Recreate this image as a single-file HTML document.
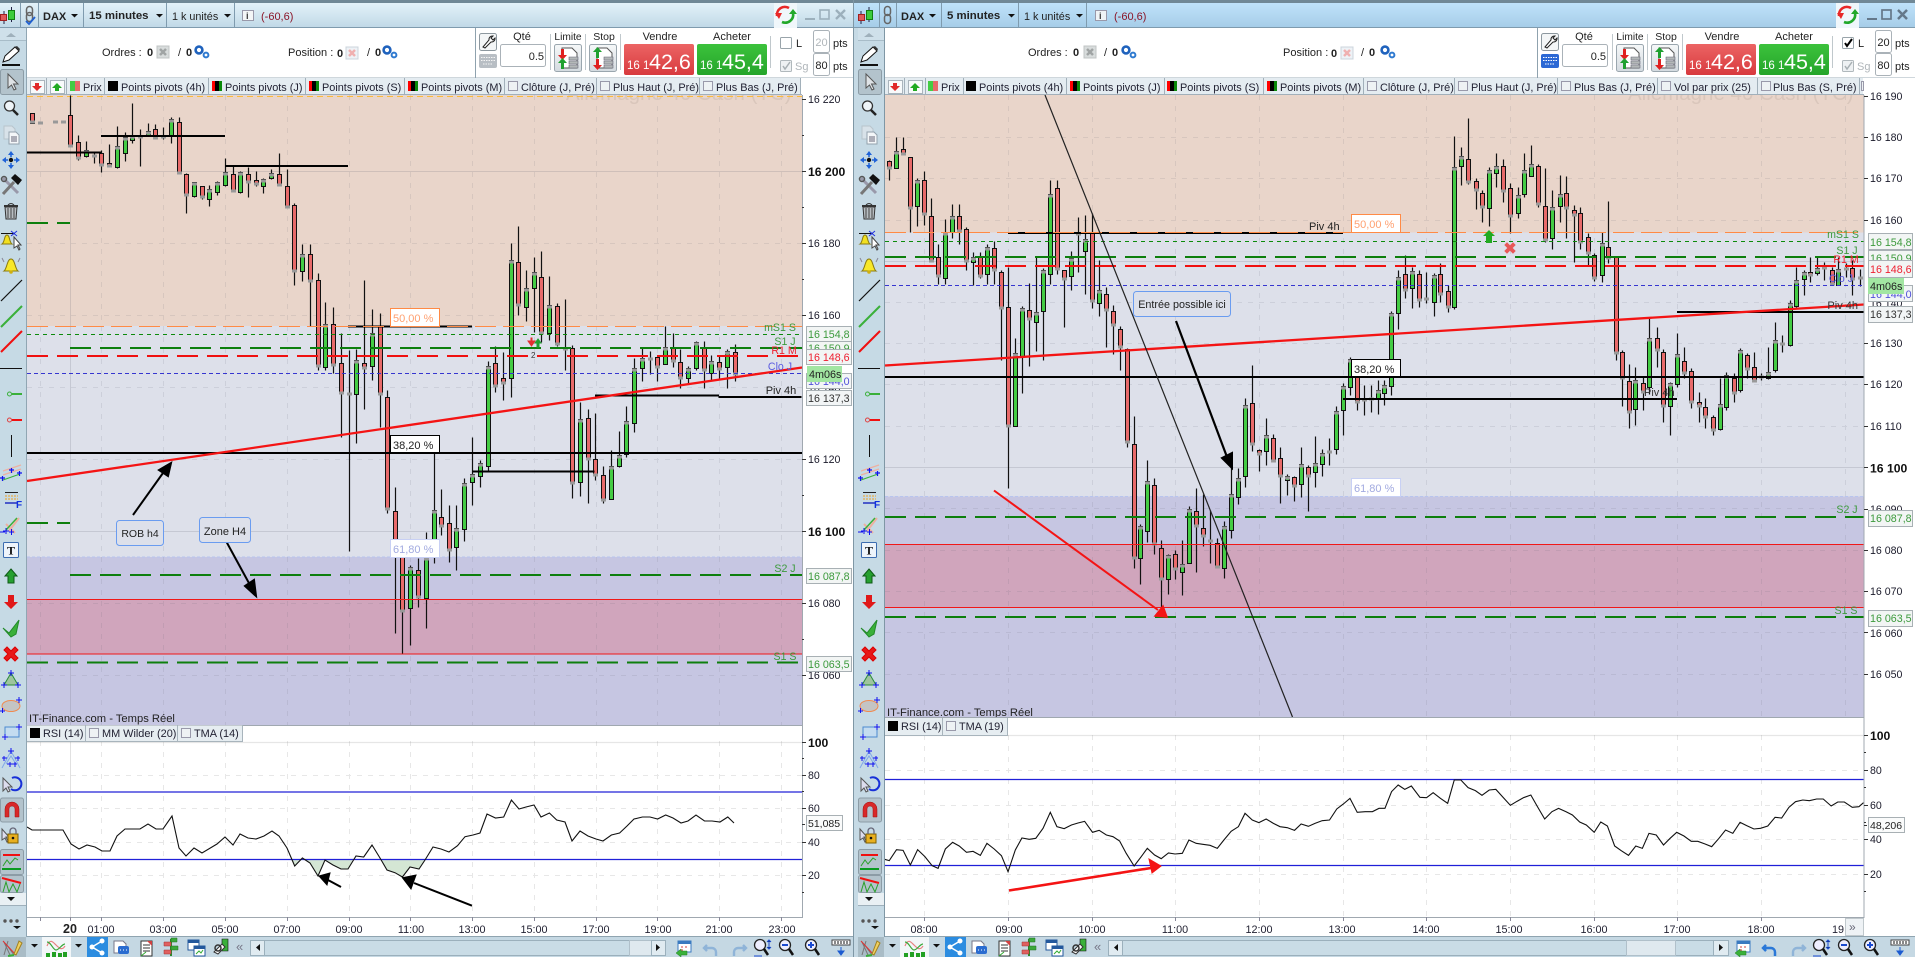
<!DOCTYPE html>
<html lang="fr"><head><meta charset="utf-8"><title>DAX</title>
<style>
html,body{margin:0;padding:0;background:#fff;overflow:hidden}
svg{display:block;position:absolute;left:0;top:0}
text{font-family:"Liberation Sans",sans-serif;font-size:11px;fill:#222}
.ax{font-size:10.6px;fill:#1a1a2a}.axb{font-size:12.2px;font-weight:bold;fill:#111}
.tab{font-size:10.9px;fill:#223}.tm{font-size:10.8px;fill:#223;text-anchor:middle}
.gr{fill:#3c9a3c;text-anchor:middle;font-size:10.6px}.rd{fill:#ee2030;text-anchor:middle;font-size:10.6px}.bl{fill:#5a5ae0;text-anchor:middle;font-size:10.6px}
.tg{font-size:10.7px}
</style></head><body>
<svg width="1915" height="957" viewBox="0 0 1915 957" xmlns="http://www.w3.org/2000/svg">
<defs>
<linearGradient id="gl" x1="0" y1="0" x2="0" y2="1"><stop offset="0" stop-color="#e3f2f9"/><stop offset="1" stop-color="#c1d9e7"/></linearGradient>
<linearGradient id="gr" x1="0" y1="0" x2="0" y2="1"><stop offset="0" stop-color="#bfe2fa"/><stop offset="1" stop-color="#a6cde8"/></linearGradient>
<linearGradient id="rb" x1="0" y1="0" x2="0" y2="1"><stop offset="0" stop-color="#ec6464"/><stop offset="1" stop-color="#d83a3e"/></linearGradient>
<linearGradient id="gb" x1="0" y1="0" x2="0" y2="1"><stop offset="0" stop-color="#3cc23c"/><stop offset="1" stop-color="#25a52a"/></linearGradient>
<linearGradient id="btn" x1="0" y1="0" x2="0" y2="1"><stop offset="0" stop-color="#f6f8f9"/><stop offset="1" stop-color="#d4dbe0"/></linearGradient>
<g id="gear"><circle cx="5" cy="5" r="3.4" fill="none" stroke="#1f62bd" stroke-width="2.6"/><circle cx="12" cy="10" r="2.4" fill="none" stroke="#2f7ad0" stroke-width="2"/></g>
<g id="doc"><path d="M1 1h12v12H1z" fill="#d8dcdc" stroke="#c0c4c4"/><path d="M4 4l6 6M10 4l-6 6" stroke="#a0a4a4" stroke-width="2.5"/></g>
<g id="docp"><path d="M1 1h12v12H1z" fill="#eef2f6" stroke="#ccd4dc"/><path d="M4 4l6 6M10 4l-6 6" stroke="#f0b0b0" stroke-width="2.5"/></g>
<g id="lim"><rect x=".5" y=".5" width="27" height="27" rx="2" fill="url(#btn)" stroke="#9aa6ae"/><path d="M8 4h10l5 5v15H8z" fill="#fff" stroke="#555"/><path d="M15 17h9v3h-9zM15 21h9v3h-9zM15 13h9v3h-9z" fill="#b4b8b8" stroke="#667" stroke-width=".6"/></g>
<g id="tabbtn"><rect x=".5" y=".5" width="14" height="13" fill="#f8fafb" stroke="#aab4bc"/></g>
<g id="side">
<rect x="0" y="28" width="26" height="12" fill="#cfe0ea"/><path d="M6 37l5-4 5 4z" fill="#9fb0bb"/><path d="M0 40.500h26" stroke="#a8bcc8"/>
<path d="M2 65H20" stroke="#111" stroke-width="2"/><path d="M3 62l2-6 10-9 4 4-10 9z" fill="#fff" stroke="#111"/><path d="M15 47l2-1 3 3-1 2z" fill="#333"/>
<rect x=".5" y="69.500" width="23" height="25" rx="2" fill="#b3c3cc" stroke="#8c9ca6"/><path d="M8 74v14l3.500-3 2.500 5 2-1-2.500-5h4.500z" fill="#dfe3e6" stroke="#555"/>
<circle cx="9.500" cy="106" r="5" fill="#eef4f8" stroke="#333" stroke-width="1.300"/><path d="M13 110l5 5" stroke="#222" stroke-width="2.500"/>
<path d="M4 126h8l3 3v10H4z" fill="#d8e2e9" stroke="#b8c4cc"/><path d="M9 132h7l3 3v9H9z" fill="#f4f7f9" stroke="#93a2ad"/><path d="M11 137h6M11 139h6M11 141h6" stroke="#667"/>
<circle cx="11" cy="160" r="2.200" fill="#111"/><path d="M11 151l-3 4h6zM11 169l-3-4h6zM2 160l4-3v6zM20 160l-4-3v6z" fill="#1f62d8"/><path d="M11 154v3M11 163v3M5 160h3M14 160h3" stroke="#1f62d8" stroke-width="1.500"/>
<path d="M3 178l15 15" stroke="#99a" stroke-width="3"/><path d="M3 194l11-12" stroke="#777" stroke-width="3"/><path d="M11 178l4-4 7 6-4 5z" fill="#111"/><circle cx="4" cy="179" r="2.500" fill="none" stroke="#555" stroke-width="1.500"/>
<path d="M5 207h12l-1 12H6z" fill="#b8bec2" stroke="#333"/><path d="M4 206h14" stroke="#333" stroke-width="2"/><path d="M8 208v10M11 208v10M14 208v10" stroke="#444"/><path d="M8 205q3-3 6 0" fill="none" stroke="#333"/>
<path d="M1 233.500h14" stroke="#111"/><path d="M2 244c3-2 2-9 5-9s2 7 5 9z" fill="#f2e020" stroke="#8a7a10"/><path d="M14 237v11l3-2 2 4 1-1-2-4h3z" fill="#fff" stroke="#444"/><path d="M11 231l6 5M17 231l-6 5" stroke="#2030e0"/>
<path d="M4 271c3-2 3-12 7-12s4 10 7 12z" fill="#f8e828" stroke="#8a7a10"/><path d="M2 258l2 4M20 258l-2 4" stroke="#889"/><circle cx="11" cy="272" r="1.800" fill="#d0b010"/>
<path d="M1 301l21-21" stroke="#111" stroke-width="1.200"/><path d="M1 327l21-21" stroke="#3ab03a" stroke-width="2"/><path d="M1 352l21-21" stroke="#f01010" stroke-width="2"/><path d="M0 368.500h22" stroke="#111"/>
<path d="M12 394h10" stroke="#3ab03a" stroke-width="2"/><circle cx="9.500" cy="394" r="2" fill="none" stroke="#3ab03a"/><path d="M12 420h10" stroke="#f01010" stroke-width="2"/><circle cx="9.500" cy="420" r="2" fill="none" stroke="#e04040"/>
<path d="M11.500 435v22" stroke="#111"/>
<path d="M3 471l18-6M3 475l18-6" stroke="#eeb0a0" stroke-width="1.200"/><path d="M3 480l17-6" stroke="#3ab03a"/><path d="M0 478h5M2.500 476v5M17 473h5M19.500 471v5M9 470h5M11.500 468v5" stroke="#1010f0" stroke-width="1.200"/>
<path d="M5 492.500h13" stroke="#222"/><path d="M5 496h13M5 499h13" stroke="#f0a020" stroke-dasharray="2 1"/><path d="M5 503h12" stroke="#2030c0" stroke-width="1.500"/><text x="16" y="508" style="font-size:10px;font-weight:bold;fill:#1030e0">F</text>
<path d="M9 531l10-13M6 524l9 9" stroke="#eeb0a0" stroke-width="2"/><path d="M6 530l11-12" stroke="#3ab03a" stroke-width="1.500"/><path d="M3 531h6M6 528v6M1 532h4M0 532h5M9 532h5M11.500 529v6" stroke="#1010f0"/>
<rect x="3.500" y="542.500" width="15" height="15" rx="1" fill="#eef4fb" stroke="#3c6cb0"/><text x="11" y="554.500" text-anchor="middle" style="font-size:12px;font-weight:bold;fill:#111;font-family:'Liberation Serif',serif">T</text>
<path d="M11 569l6 7h-3v7H8v-7H5z" fill="#26a030" stroke="#0e5a16"/>
<path d="M8 595h6v7h4l-7 7-7-7h4z" fill="#e01818"/>
<path d="M3 628l6 5 10-13-3 14-5 3z" fill="#3ab03a" stroke="#228a28"/>
<path d="M4 650l3-3 4 4 4-4 3 3-4 4 4 4-3 3-4-4-4 4-3-3 4-4z" fill="#e81818" stroke="#d00"/>
<path d="M11 673l7 12H4z" fill="#9ec49e" stroke="#2a8a3a"/><path d="M8 673h6M11 670v6M1 685h6M4 682v6M15 685h6M18 682v6" stroke="#1010f0"/>
<ellipse cx="11" cy="706" rx="9" ry="5.500" fill="#c4c4c4" stroke="#f08a50"/><path d="M16 700h6M19 697v6M0 711h5M2.500 708v5" stroke="#1010f0"/>
<path d="M5 727h14v10H5z" fill="#c4dcf0" stroke="#4c8ad0"/><path d="M16 727h6M19 724v6M2 737h6M5 734v6" stroke="#1010f0"/>
<path d="M11 751l-9 17M11 751l9 17M6 764l5-8 5 8" fill="none" stroke="#80a8e8"/><path d="M8 751h6M11 748v6M2 758h5M4 756v5M15 758h5M18 756v5M7 764h5M10 762v5M12 764h5M15 762v5" stroke="#1010f0"/>
<path d="M3 778v13l3-3 2 4 2-1-2-4h4z" fill="#dde" stroke="#555"/><path d="M12 778a6.500 6.500 0 1 1-1 11" fill="none" stroke="#1830d8" stroke-width="2"/>
<rect x=".5" y="798" width="23" height="24" rx="2" fill="#b3c3cc" stroke="#8c9ca6"/><path d="M5 817v-8a7 7 0 0 1 14 0v8h-4v-8a3 3 0 0 0-6 0v8z" fill="#d82828" stroke="#a01010" stroke-width=".5"/>
<path d="M2 829v11l3-2 2 4 1-1-2-4h3z" fill="#dde" stroke="#555"/><rect x="8" y="834" width="10" height="9" fill="#e8b020" stroke="#806000"/><path d="M10 834v-3a3 3 0 0 1 6 0v3" fill="none" stroke="#667" stroke-width="1.300"/><circle cx="13" cy="838" r="1.300" fill="#111"/>
<rect x=".5" y="849.500" width="23" height="25" rx="2" fill="#b3c3cc" stroke="#8c9ca6"/><path d="M3 855h17" stroke="#f01010" stroke-width="2"/><path d="M2 869h19" stroke="#0a9a20" stroke-width="2"/><path d="M3 866l4-6 3 4 5-6 3 2" fill="none" stroke="#2aa02a"/>
<rect x=".5" y="875.500" width="23" height="17" rx="2" fill="#b3c3cc" stroke="#8c9ca6"/><path d="M2 878l19 5" stroke="#f01010" stroke-width="2"/><path d="M3 892l3-10 3 10 4-8 4 8 3-8" fill="none" stroke="#2aa02a"/>
<rect x="0" y="893" width="26" height="13" fill="#e9f0f4"/><path d="M0 905.500h26" stroke="#9fb0bb"/><path d="M7 897h8l-4 4z" fill="#111"/>
<circle cx="5" cy="921" r="1.700" fill="#555"/><circle cx="11" cy="921" r="1.700" fill="#555"/><circle cx="17" cy="921" r="1.700" fill="#555"/><path d="M13 926h8l-4 3z" fill="#111"/>
</g>
<g id="tbl">
<rect x="0" y="937" width="26" height="20" fill="#a9bcc6"/><path d="M4 955l4-14M10 955l-6-13M14 955l-8-11" stroke="#777"/><path d="M3 941l12 13" stroke="#e03030"/><path d="M14 954l5-13 3 2-6 12z" fill="#f0d060" stroke="#a08020"/><path d="M8 956l6-1" stroke="#3ab03a" stroke-width="2"/>
<path d="M31 944h7l-3.500 3.500z" fill="#111"/>
<rect x="42" y="937" width="29" height="20" fill="#f2f6f8"/><path d="M47 946c3-8 6-4 9-1s6 6 9 1" fill="none" stroke="#e88080" stroke-width="1.200"/><path d="M47 942c4 0 6 8 9 8s6-6 9-6" fill="none" stroke="#38a838" stroke-width="1.200"/><path d="M48 957v-4M54 957v-5M60 957v-4M65 957v-5" stroke="#22a022" stroke-width="4"/>
<path d="M75 944h7l-3.500 3.500z" fill="#111"/>
<rect x="87" y="937" width="21" height="20" fill="#2b8ce0"/><path d="M102 941l-10 6 10 6" fill="none" stroke="#fff" stroke-width="1.500"/><circle cx="92" cy="947" r="2.500" fill="#fff"/><circle cx="102" cy="941" r="2.500" fill="#fff"/><circle cx="102" cy="953" r="2.500" fill="#fff"/>
<path d="M114 941h9l3 3v9h-12z" fill="#fff" stroke="#778"/><rect x="118" y="946" width="11" height="8" rx="2" fill="#2a6cd0"/><path d="M120 950h1M123 950h1M126 950h1" stroke="#fff"/>
<path d="M141 941h11v15h-11z" fill="#fff" stroke="#333"/><path d="M143 945h7M143 948h7M143 951h7" stroke="#333"/><path d="M147 941h5v5z" fill="#d04040"/><path d="M141 956l5-4" stroke="#3a3"/>
<path d="M171 939v17" stroke="#2a8a2a" stroke-width="2"/><path d="M164 942h7v4h-7zM164 950h7v4h-7z" fill="#e06060" stroke="#a03030" stroke-width=".5"/><path d="M171 946h7v4h-7zM171 938h6v4h-6z" fill="#3aa83a" stroke="#207020" stroke-width=".5"/>
<rect x="188" y="940" width="11" height="10" fill="#fff" stroke="#24589c"/><rect x="188" y="940" width="11" height="3" fill="#24589c"/><rect x="194" y="946" width="11" height="10" fill="#fff" stroke="#24589c"/><rect x="194" y="946" width="11" height="3" fill="#24589c"/><path d="M196 954l3-3 2 2 2-3" fill="none" stroke="#3a3"/>
<path d="M222 939h6v12h-6z" fill="#3ab03a" stroke="#111" stroke-width=".6"/><path d="M214 952l8-8 3 3-7 7z" fill="#fff" stroke="#333"/><circle cx="218" cy="948" r="3" fill="none" stroke="#333" stroke-width="1.500"/>
<text x="236" y="951" style="font-size:13px;fill:#778">«</text>
</g>
<g id="tbr">
<path d="M678 941h13v11h-13z" fill="#fff" stroke="#3a7ac0"/><path d="M678 941h13v3h-13z" fill="#3a7ac0"/><path d="M681 947h2M685 947h2M681 950h2" stroke="#d04040"/><path d="M676 953l5-4v2h6v4h-6v2z" fill="#3ab03a" stroke="#208020" stroke-width=".5"/>
<path d="M707 945l-3 3 3 3M704 948h8a4 4 0 0 1 4 4v4" fill="none" stroke="#8fb4d8" stroke-width="2.400"/>
<path d="M743 945l3 3-3 3M746 948h-8a4 4 0 0 0-4 4v4" fill="none" stroke="#8fb4d8" stroke-width="2.400"/>
<circle cx="760" cy="945" r="5.500" fill="#eef" stroke="#222" stroke-width="1.300"/><path d="M764 949l4 6" stroke="#111" stroke-width="2.500"/><path d="M769 940v9M767 942l2-2 2 2M767 947l2 2 2-2M754 956h8" stroke="#1a4ad0"/>
<circle cx="785" cy="945" r="5.500" fill="#eef" stroke="#222" stroke-width="1.300"/><path d="M789 949l4 6" stroke="#111" stroke-width="2.500"/><path d="M782 945h6" stroke="#1a4ad0" stroke-width="2"/>
<circle cx="811" cy="945" r="5.500" fill="#eef" stroke="#222" stroke-width="1.300"/><path d="M815 949l4 6" stroke="#111" stroke-width="2.500"/><path d="M808 945h6M811 942v6" stroke="#1a4ad0" stroke-width="2"/>
<rect x="832" y="940" width="18" height="5" fill="#fff" stroke="#444"/><path d="M835 941v3M838 941v3M841 941v3M844 941v3M847 941v3" stroke="#111"/><path d="M841 947v5M838 951h6l-3 4z" fill="#1a5ad0" stroke="#1a5ad0"/>
</g>
<g id="panel">
<rect x="479.500" y="33.500" width="17" height="17" rx="2" fill="#f4f6f7" stroke="#8d989f"/><path d="M483 47l6-7a3.500 3.500 0 0 1 4-4l-2 2 2 2 2-2a3.500 3.500 0 0 1-4 4l-6 6z" fill="#fff" stroke="#222"/>
<text x="522" y="40" text-anchor="middle">Qté</text><rect x="500.500" y="44.500" width="45" height="22" rx="2" fill="#fff" stroke="#aab2b8"/><text x="544" y="60" text-anchor="end">0.5</text>
<path d="M550.500 34v36M585.500 34v36M620.500 34v36M770.500 36v32" stroke="#c0c8cc"/>
<text x="568" y="40" text-anchor="middle" style="font-size:10.200px">Limite</text><text x="604" y="40" text-anchor="middle" style="font-size:10.500px">Stop</text>
<use href="#lim" x="554" y="44"/><path d="M561 49v6h-3l4.500 5 4.500-5h-3v-6z" fill="#e02020"/><path d="M562.500 58l-4.500 5h3v6h3v-6h3z" fill="#20a030"/>
<use href="#lim" x="589" y="44"/><path d="M597.500 47l-4.500 5h3v6h3v-6h3z" fill="#20a030"/><path d="M596 59v6h-3l4.500 5 4.500-5h-3v-6z" fill="#e02020"/>
<text x="660" y="40" text-anchor="middle" style="font-size:11px">Vendre</text><text x="732" y="40" text-anchor="middle" style="font-size:11px">Acheter</text>
<rect x="624" y="44" width="70" height="31" rx="2" fill="url(#rb)"/><rect x="697" y="44" width="70" height="31" rx="2" fill="url(#gb)"/>
<text x="627" y="69" style="font-size:11.500px;fill:#fff">16 1</text><text x="649" y="69" style="font-size:21.500px;fill:#fff">42,6</text>
<text x="700" y="69" style="font-size:11.500px;fill:#fff">16 1</text><text x="722" y="69" style="font-size:21.500px;fill:#fff">45,4</text>
<rect x="813.500" y="30.500" width="16" height="22" rx="2" fill="#fff" stroke="#aab2b8"/><rect x="813.500" y="53.500" width="16" height="22" rx="2" fill="#fff" stroke="#aab2b8"/>
<text x="833" y="47">pts</text><text x="833" y="70">pts</text><text x="821.500" y="69" text-anchor="middle">80</text>
<rect x="780.500" y="60.500" width="11" height="11" rx="1" fill="#eef1f3" stroke="#b0b8bc"/><path d="M783 66l2 3 5-7" fill="none" stroke="#a8b0b4" stroke-width="1.500"/><text x="795" y="70" style="fill:#b0b6ba">Sg</text>
<path d="M805 19h10" stroke="#9cb0bc" stroke-width="2"/><rect x="820" y="10" width="9" height="9" fill="none" stroke="#9cb0bc" stroke-width="1.600"/><path d="M836 10l9 9M845 10l-9 9" stroke="#9cb0bc" stroke-width="2.400"/>
<rect x="774" y="3" width="23" height="25" fill="#f0f7fb"/><path d="M777 16a8 8 0 0 1 12-8" fill="none" stroke="#e82828" stroke-width="2.600"/><path d="M775 13h7l-3 6z" fill="#e82828"/><path d="M793 13a8 8 0 0 1-11 9" fill="none" stroke="#22a82a" stroke-width="2.600"/><path d="M789 14l4-5 4 5z" fill="#22a82a"/>
</g>
</defs>

<rect width="1915" height="957" fill="#fff"/>
<!-- LEFT PLOT -->
<rect x="27" y="95" width="775" height="231" fill="#e9d5ca"/><rect x="27" y="326" width="775" height="231" fill="#dde0ea"/><rect x="27" y="557" width="775" height="168" fill="#c6c6e2"/><rect x="27" y="599.500" width="775" height="54.500" fill="#d0a5bc"/>
<path d="M27 557h775" stroke="#b8c4ee" stroke-dasharray="3 2"/>
<path d="M27 243.500h775M27 315.500h775M27 387.500h775M27 459.500h775M27 603.500h775M27 675.500h775M40.500 95v630M101.500 95v630M163.500 95v630M225.500 95v630M287.500 95v630M349.500 95v630M410.500 95v630M472.500 95v630M534.500 95v630M596.500 95v630M657.500 95v630M719.500 95v630M781.500 95v630" stroke="#6a6a7a" stroke-opacity=".14" stroke-dasharray="5 6"/>
<path d="M27 171.500h775M27 531.500h775M70.500 95v630" stroke="#6a6a7a" stroke-opacity=".2"/>
<text x="566" y="100" style="font-size:20.500px;fill:#d9c6bb">Allemagne 40 Cash (TC)</text>
<path d="M27 96.500h775" stroke="#fbbc3a" stroke-dasharray="6 4"/>
<!-- RIGHT PLOT -->
<rect x="885" y="95" width="979" height="138" fill="#e9d5ca"/><rect x="885" y="232.500" width="979" height="264" fill="#dde0ea"/><rect x="885" y="496.500" width="979" height="221" fill="#c6c6e2"/><rect x="885" y="544.500" width="979" height="63" fill="#d0a5bc"/>
<path d="M885 496.500h979" stroke="#b8c4ee" stroke-dasharray="3 2"/>
<path d="M885 137.500h979M885 178.500h979M885 220.500h979M885 302.500h979M885 343.500h979M885 384.500h979M885 426.500h979M885 508.500h979M885 550.500h979M885 591.500h979M885 632.500h979M885 674.500h979M924.500 95v622M1008.500 95v622M1092.500 95v622M1175.500 95v622M1259.500 95v622M1343.500 95v622M1426.500 95v622M1510.500 95v622M1594.500 95v622M1677.500 95v622M1761.500 95v622M1845.500 95v622" stroke="#6a6a7a" stroke-opacity=".14" stroke-dasharray="5 6"/>
<path d="M885 261.500h979M885 467.500h979" stroke="#6a6a7a" stroke-opacity=".2"/>
<text x="1628" y="100" style="font-size:20.500px;fill:#d9c6bb">Allemagne 40 Cash (TC)</text>

<!-- CANDLES -->
<g transform="translate(.5 .5)">
<path fill="none" stroke="#111" stroke-width="1.200" d="M70 95V147M78 135V160M86 141V157M94 151V163M101 150V172M109 144V167M117 126V168M125 132V161M132 103V143M140 129V166M148 123V136M155 124V139M163 127V139M171 117V143M179 117V173M186 173V213M194 182V197M202 186V199M209 185V206M217 181V195M225 158V186M233 165V192M240 171V193M248 167V197M256 171V186M263 178V193M271 169V179M279 153V186M287 169V208M294 203V285M302 244V281M310 244V326M318 273V370M325 302V370M333 307V373M341 333V437M349 350V551M356 349V443M364 280V409M372 309V380M380 313V427M387 390V513M395 487V633M402 555V654M410 565V645M418 558V607M426 532V628M434 453V563M441 489V535M449 505V562M456 505V570M464 478V541M472 437V505M480 460V487M488 361V470M495 346V392M503 352V400M511 243V397M518 226V315M526 270V321M534 257V332M541 251V342M549 276V340M557 303V346M565 299V370M572 345V498M580 402V496M588 409V503M595 413V480M603 466V503M611 450V499M619 431V467M626 406V457M634 358V432M642 347V381M650 351V374M657 357V381M665 326V364M673 333V367M680 349V388M688 366V383M696 341V370M704 341V388M711 355V381M719 355V378M727 349V388M735 344V381"/>
<path fill="#e86a6a" stroke="#111" d="M30 113h4V123h-4zM68 115h4V146h-4zM76 142h4V158h-4zM99 153h4V165h-4zM107 163h4V166h-4zM153 129h4V138h-4zM177 122h4V173h-4zM184 174h4V195h-4zM200 186h4V197h-4zM231 174h4V191h-4zM246 174h4V182h-4zM254 180h4V184h-4zM277 174h4V185h-4zM285 186h4V207h-4zM292 205h4V271h-4zM308 254h4V281h-4zM316 280h4V366h-4zM331 324h4V365h-4zM339 363h4V393h-4zM362 363h4V368h-4zM378 326h4V394h-4zM385 397h4V509h-4zM393 511h4V550h-4zM400 557h4V611h-4zM416 570h4V597h-4zM439 517h4V526h-4zM447 523h4V550h-4zM493 363h4V386h-4zM501 378h4V383h-4zM516 262h4V305h-4zM539 277h4V333h-4zM555 306h4V344h-4zM570 348h4V483h-4zM586 418h4V459h-4zM593 459h4V475h-4zM601 475h4V500h-4zM655 357h4V367h-4zM671 347h4V361h-4zM678 362h4V378h-4zM702 347h4V370h-4zM717 362h4V369h-4zM733 352h4V374h-4z"/>
<path fill="#44cc44" stroke="#111" d="M84 150h4V156h-4zM115 146h4V167h-4zM123 137h4V153h-4zM130 135h4V140h-4zM146 131h4V135h-4zM169 119h4V135h-4zM192 182h4V196h-4zM207 189h4V199h-4zM215 182h4V192h-4zM223 172h4V185h-4zM238 172h4V192h-4zM261 179h4V186h-4zM269 173h4V178h-4zM300 254h4V271h-4zM323 324h4V367h-4zM354 360h4V394h-4zM370 333h4V366h-4zM408 567h4V608h-4zM424 557h4V598h-4zM432 510h4V557h-4zM454 528h4V547h-4zM462 483h4V529h-4zM470 474h4V482h-4zM478 463h4V476h-4zM486 366h4V466h-4zM509 260h4V378h-4zM524 288h4V307h-4zM532 272h4V288h-4zM547 305h4V333h-4zM578 419h4V482h-4zM609 466h4V499h-4zM617 455h4V466h-4zM624 421h4V454h-4zM632 368h4V423h-4zM640 358h4V368h-4zM663 347h4V364h-4zM686 368h4V378h-4zM694 342h4V368h-4zM709 361h4V373h-4zM725 351h4V367h-4z"/>
<path fill="none" stroke="#999" stroke-width="5" d="M32 120v3M40 121v3M55 120v3M63 120v3M70 144v3M78 156v3M94 154v3M101 163v3M109 164v3M140 135v3M155 136v3M163 135v3M179 171v3M186 193v3M202 195v3M233 189v3M248 180v3M256 182v3M279 183v3M287 205v3M294 269v3M310 279v3M318 364v3M333 363v3M341 391v3M349 392v3M364 366v3M380 392v3M387 507v3M402 609v3M418 595v3M441 524v3M449 548v3M495 384v3M503 381v3M518 303v3M541 331v3M557 342v3M565 347v3M572 481v3M588 457v3M595 473v3M603 498v3M650 357v3M657 365v3M673 359v3M680 376v3M704 368v3M719 367v3M735 372v3M86 150v3M117 146v3M125 137v3M132 135v3M148 131v3M171 119v3M194 182v3M209 189v3M217 182v3M225 172v3M240 172v3M263 179v3M271 173v3M302 254v3M325 324v3M356 360v3M372 333v3M410 567v3M426 557v3M434 510v3M456 528v3M464 483v3M472 474v3M480 463v3M488 366v3M511 260v3M526 288v3M534 272v3M549 305v3M580 419v3M611 466v3M619 455v3M626 421v3M634 368v3M642 358v3M665 347v3M688 368v3M696 342v3M711 361v3M727 351v3"/>

<path fill="none" stroke="#111" stroke-width="1.200" d="M889 160V180M896 137V168M903 137V154M910 157V232M917 178V226M924 171V225M931 198V262M938 244V284M945 219V284M952 204V238M959 204V244M966 227V270M973 252V285M980 252V278M987 244V284M994 241V284M1001 270V360M1008 267V488M1015 338V426M1022 306V393M1029 283V366M1036 256V351M1043 268V360M1050 180V284M1057 180V274M1064 270V327M1071 251V290M1078 217V272M1085 215V294M1092 213V308M1099 260V316M1106 287V347M1113 305V354M1120 326V370M1127 348V447M1134 416V568M1140 524V584M1147 460V542M1154 478V554M1161 540V608M1168 554V594M1175 550V579M1182 540V595M1189 506V563M1196 488V572M1203 494V546M1210 510V563M1217 538V567M1224 521V578M1231 467V538M1238 468V504M1245 398V487M1252 365V451M1259 449V471M1266 418V465M1273 434V461M1280 447V503M1287 474V495M1294 476V501M1301 447V497M1308 465V511M1315 436V487M1322 449V476M1329 438V465M1336 406V454M1343 383V435M1350 357V395M1357 366V410M1364 385V415M1371 385V412M1378 380V414M1384 380V405M1391 311V395M1398 270V329M1405 255V298M1412 267V308M1419 270V307M1426 272V303M1434 273V316M1440 263V302M1448 285V312M1454 136V309M1461 147V185M1468 118V184M1476 178V209M1482 190V222M1489 167V226M1496 153V187M1503 159V202M1510 183V233M1518 187V218M1524 153V197M1531 145V176M1538 164V207M1545 168V242M1552 190V249M1560 175V222M1566 176V238M1574 205V262M1580 207V249M1588 233V265M1594 253V281M1602 232V282M1608 201V263M1616 256V360M1622 350V406M1629 364V428M1635 367V425M1643 377V410M1649 318V394M1657 327V367M1663 349V422M1670 382V435M1677 333V387M1684 347V378M1691 368V408M1699 392V422M1705 398V428M1713 415V435M1720 378V430M1726 372V410M1734 373V402M1740 348V392M1747 353V378M1754 352V382M1761 373V380M1768 347V379M1775 322V372M1782 335V352M1790 300V346M1796 267V307M1804 270V295M1810 257V282M1817 256V275M1824 262V280M1832 267V285M1838 257V285M1846 263V277M1852 260V295M1860 269V286"/>
<path fill="#e86a6a" stroke="#111" d="M887 161h4V168h-4zM901 149h4V154h-4zM908 157h4V208h-4zM922 180h4V214h-4zM929 216h4V261h-4zM936 257h4V276h-4zM957 216h4V231h-4zM964 229h4V261h-4zM978 257h4V276h-4zM992 248h4V270h-4zM999 272h4V308h-4zM1006 307h4V426h-4zM1027 310h4V319h-4zM1055 188h4V269h-4zM1062 270h4V279h-4zM1090 232h4V301h-4zM1104 294h4V310h-4zM1111 311h4V325h-4zM1118 329h4V347h-4zM1125 349h4V442h-4zM1132 444h4V558h-4zM1152 485h4V544h-4zM1159 548h4V579h-4zM1173 554h4V569h-4zM1194 511h4V526h-4zM1201 528h4V536h-4zM1215 543h4V567h-4zM1250 403h4V444h-4zM1257 450h4V454h-4zM1271 438h4V461h-4zM1278 458h4V476h-4zM1292 477h4V486h-4zM1306 467h4V476h-4zM1355 376h4V402h-4zM1403 274h4V290h-4zM1417 274h4V300h-4zM1438 274h4V294h-4zM1446 291h4V307h-4zM1466 159h4V182h-4zM1474 181h4V190h-4zM1480 193h4V207h-4zM1501 166h4V191h-4zM1508 188h4V216h-4zM1536 166h4V204h-4zM1543 206h4V240h-4zM1564 193h4V208h-4zM1572 210h4V215h-4zM1578 213h4V242h-4zM1586 237h4V253h-4zM1592 255h4V278h-4zM1606 247h4V258h-4zM1614 257h4V353h-4zM1620 352h4V378h-4zM1627 381h4V412h-4zM1641 383h4V392h-4zM1655 338h4V350h-4zM1661 352h4V406h-4zM1682 361h4V373h-4zM1689 371h4V402h-4zM1697 402h4V406h-4zM1703 407h4V417h-4zM1711 417h4V430h-4zM1732 378h4V393h-4zM1745 355h4V369h-4zM1752 367h4V381h-4zM1808 272h4V275h-4zM1830 270h4V284h-4zM1850 268h4V279h-4z"/>
<path fill="#44cc44" stroke="#111" d="M894 151h4V168h-4zM915 180h4V206h-4zM943 232h4V278h-4zM950 216h4V232h-4zM971 257h4V262h-4zM985 247h4V274h-4zM1013 353h4V426h-4zM1020 308h4V356h-4zM1034 312h4V322h-4zM1041 270h4V311h-4zM1048 194h4V274h-4zM1069 258h4V276h-4zM1083 239h4V251h-4zM1097 290h4V303h-4zM1138 526h4V558h-4zM1145 481h4V531h-4zM1166 555h4V579h-4zM1180 564h4V572h-4zM1187 509h4V563h-4zM1222 526h4V568h-4zM1229 494h4V530h-4zM1236 478h4V497h-4zM1243 405h4V476h-4zM1264 435h4V451h-4zM1285 476h4V480h-4zM1299 464h4V484h-4zM1313 463h4V472h-4zM1320 453h4V464h-4zM1334 411h4V449h-4zM1341 386h4V410h-4zM1348 359h4V387h-4zM1376 390h4V398h-4zM1382 385h4V393h-4zM1389 313h4V386h-4zM1396 277h4V313h-4zM1410 271h4V288h-4zM1432 275h4V302h-4zM1452 167h4V307h-4zM1459 156h4V166h-4zM1487 170h4V208h-4zM1494 166h4V173h-4zM1516 195h4V213h-4zM1522 170h4V194h-4zM1529 164h4V176h-4zM1550 207h4V238h-4zM1558 194h4V206h-4zM1600 243h4V275h-4zM1633 380h4V409h-4zM1647 338h4V387h-4zM1668 383h4V406h-4zM1675 354h4V384h-4zM1718 404h4V429h-4zM1724 375h4V407h-4zM1738 350h4V390h-4zM1766 372h4V378h-4zM1773 340h4V370h-4zM1788 303h4V345h-4zM1794 280h4V306h-4zM1802 272h4V279h-4zM1815 268h4V273h-4zM1836 269h4V285h-4z"/>
<path fill="none" stroke="#999" stroke-width="5" d="M889 166v3M903 152v3M910 206v3M924 212v3M931 259v3M938 274v3M959 229v3M966 259v3M980 274v3M994 268v3M1001 306v3M1008 424v3M1029 317v3M1057 267v3M1064 277v3M1092 299v3M1106 308v3M1113 323v3M1120 345v3M1127 440v3M1134 556v3M1154 542v3M1161 577v3M1175 567v3M1196 524v3M1203 534v3M1217 565v3M1252 442v3M1259 452v3M1273 459v3M1280 474v3M1294 484v3M1308 474v3M1357 400v3M1405 288v3M1419 298v3M1440 292v3M1448 305v3M1468 180v3M1476 188v3M1482 205v3M1503 189v3M1510 214v3M1538 202v3M1545 238v3M1566 206v3M1574 213v3M1580 240v3M1588 251v3M1594 276v3M1608 256v3M1616 351v3M1622 376v3M1629 410v3M1643 390v3M1657 348v3M1663 404v3M1684 371v3M1691 400v3M1699 404v3M1705 415v3M1713 428v3M1734 391v3M1747 367v3M1754 379v3M1810 273v3M1832 282v3M1852 277v3M896 151v3M917 180v3M945 232v3M952 216v3M973 257v3M987 247v3M1015 353v3M1022 308v3M1036 312v3M1043 270v3M1050 194v3M1071 258v3M1085 239v3M1099 290v3M1140 526v3M1147 481v3M1168 555v3M1182 564v3M1189 509v3M1224 526v3M1231 494v3M1238 478v3M1245 405v3M1266 435v3M1287 476v3M1301 464v3M1315 463v3M1322 453v3M1336 411v3M1343 386v3M1350 359v3M1378 390v3M1384 385v3M1391 313v3M1398 277v3M1412 271v3M1434 275v3M1454 167v3M1461 156v3M1489 170v3M1496 166v3M1518 195v3M1524 170v3M1531 164v3M1552 207v3M1560 194v3M1602 243v3M1635 380v3M1649 338v3M1670 383v3M1677 354v3M1720 404v3M1726 375v3M1740 350v3M1768 372v3M1775 340v3M1790 303v3M1796 280v3M1804 272v3M1817 268v3M1838 269v3M1078 232v3M1210 539v3M1329 450v3M1364 398v3M1371 397v3M1426 297v3M1761 375v3M1782 342v3M1824 266v3M1846 267v3M1860 276v3"/>
</g>

<!-- LEFT OVERLAY LINES -->
<path d="M27 152.500h74M101 136h124M225 166h123M348 326.500h124M472.500 471.500h122M595 395.500h124M718.500 397h83" stroke="#000" stroke-width="2" fill="none"/>
<path d="M27 453h775" stroke="#000" stroke-width="2"/>
<path d="M27 326.500h775" stroke="#ff8a45" stroke-dasharray="21 7"/>
<path d="M27 334.500h775" stroke="#0c8a0c" stroke-dasharray="4 4"/>
<path d="M70 348h732M70 575h732M27 662.500h775" stroke="#0d7f0d" stroke-width="2" stroke-dasharray="21 9"/>
<path d="M27 223h21M57 223h13M27 523h21M57 523h13" stroke="#0d7f0d" stroke-width="2"/>
<path d="M27 356h775" stroke="#f01010" stroke-width="2" stroke-dasharray="21 9"/>
<path d="M27 373.500h775" stroke="#3636d0" stroke-dasharray="4 3"/>
<path d="M27 599.500h775M27 654h775" stroke="#f01818"/>
<path d="M27 481L802 367.500" stroke="#f41414" stroke-width="2.300"/>
<path d="M133 515L163 473" stroke="#000" stroke-width="2"/><path d="M171 463L168 476 159 470z" fill="#000" stroke="#000" stroke-width="2"/>
<path d="M226 541L250 585" stroke="#000" stroke-width="2"/><path d="M256 596L245 586 254 580z" fill="#000" stroke="#000" stroke-width="2"/>
<rect x="116.500" y="520.500" width="47" height="25" rx="3" fill="#dde0ea" stroke="#6a9cf0"/><text x="140" y="537" text-anchor="middle" style="font-size:10.500px">ROB h4</text>
<rect x="199.500" y="517.500" width="51" height="25" rx="3" fill="#dde0ea" stroke="#6a9cf0"/><text x="225" y="535" text-anchor="middle" style="font-size:11px">Zone H4</text>
<rect x="390.500" y="308.500" width="49" height="18" fill="#fff" stroke="#ff8a45"/><text x="393" y="322" style="fill:#ffa070;font-size:11px">50,00 %</text>
<rect x="390.500" y="435.500" width="49" height="17" fill="#fff" stroke="#000"/><text x="393" y="449" style="font-size:11px">38,20 %</text>
<rect x="390.500" y="539.500" width="49" height="18" fill="#fff" stroke="#c8d0f4"/><text x="393" y="553" style="fill:#a2aae0;font-size:11px">61,80 %</text>
<path d="M531 338v3h-3l3.500 5 3.500-5h-3v-3z" fill="#e03030" stroke="#e03030"/><path d="M538 339l-3 4h2v4h2v-4h2z" fill="#20a030" stroke="#20a030"/><text x="531" y="358" style="font-size:8px;fill:#333">2</text>
<text x="780" y="331" class="gr">mS1 S</text><text x="785" y="345" class="gr">S1 J</text><text x="784" y="354" class="rd">R1 M</text><text x="780" y="370" class="bl">Clo J</text><text x="781" y="394" text-anchor="middle">Piv 4h</text><text x="785" y="572" class="gr">S2 J</text><text x="785" y="660" class="gr">S1 S</text>

<!-- RIGHT OVERLAY LINES -->
<path d="M1008 233h335M1343 399h334M1677 312h187" stroke="#000" stroke-width="2" fill="none"/>
<path d="M885 377h979" stroke="#000" stroke-width="2"/>
<path d="M885 232.500h979" stroke="#ff8a45" stroke-dasharray="21 7"/>
<path d="M885 241.500h979" stroke="#0c8a0c" stroke-dasharray="4 4"/>
<path d="M885 257h979M885 517h979M885 617h979" stroke="#0d7f0d" stroke-width="2" stroke-dasharray="21 9"/>
<path d="M885 266h979" stroke="#f01010" stroke-width="2" stroke-dasharray="21 9"/>
<path d="M885 285.500h979" stroke="#3636d0" stroke-dasharray="4 3"/>
<path d="M885 544.500h979M885 607.500h979" stroke="#f01818"/>
<path d="M885 365.500L1864 304.500" stroke="#f41414" stroke-width="2.300"/>
<path d="M1045 95L1292.500 717" stroke="#222" stroke-width="1.200"/>
<path d="M1176 321L1227 457" stroke="#000" stroke-width="2.200"/><path d="M1232 468L1222 458 1232 453z" fill="#000" stroke="#000" stroke-width="2"/>
<path d="M994 490.500L1158 610" stroke="#f41414" stroke-width="2"/><path d="M1167 617L1155 616 1163 606z" fill="#f41414" stroke="#f41414" stroke-width="1.500"/>
<rect x="1133.500" y="291.500" width="97" height="25" rx="3" fill="#dde0ea" stroke="#6a9cf0"/><text x="1182" y="308" text-anchor="middle" style="font-size:10.800px">Entrée possible ici</text>
<rect x="1351.500" y="214.500" width="49" height="18" fill="#fff" stroke="#ff8a45"/><text x="1354" y="228" style="fill:#ffa070;font-size:11px">50,00 %</text>
<rect x="1351.500" y="359.500" width="49" height="17" fill="#fff" stroke="#000"/><text x="1354" y="373" style="font-size:11px">38,20 %</text>
<rect x="1351.500" y="478.500" width="49" height="18" fill="#fff" stroke="#c8d0f4"/><text x="1354" y="492" style="fill:#a2aae0;font-size:11px">61,80 %</text>
<path d="M1489 230l6 6h-3v7h-6v-7h-3z" fill="#22aa22"/><path d="M1505 245l2-2 3 3 3-3 2 2-3 3 3 3-2 2-3-3-3 3-2-2 3-3z" fill="#e85858" stroke="#e85858"/>
<text x="1309" y="230" style="font-size:11px">Piv 4h</text><text x="1644" y="396" style="font-size:11px;fill:#333">Piv 4h</text><text x="1858" y="309" text-anchor="end" style="fill:#333">Piv 4h</text>
<text x="1843" y="238" class="gr">mS1 S</text><text x="1847" y="254" class="gr">S1 J</text><text x="1846" y="263" class="rd">R1 M</text><text x="1841" y="282" class="bl">Clo J</text><text x="1847" y="513" class="gr">S2 J</text><text x="1846" y="614" class="gr">S1 S</text>

<text x="29" y="722" style="font-size:11.200px">IT-Finance.com - Temps Réel</text>
<text x="887" y="716" style="font-size:11.200px">IT-Finance.com - Temps Réel</text>

<!-- WHITE SURROUNDS -->
<rect x="0" y="0" width="1915" height="28" fill="#fff"/>
<rect x="0" y="28" width="1915" height="67" fill="#fff"/>
<rect x="802" y="95" width="52" height="842" fill="#fff"/><rect x="1864" y="95" width="51" height="842" fill="#fff"/>

<!-- RSI LEFT -->
<rect x="27" y="725" width="775" height="192" fill="#fff"/>
<path d="M27 742.500h775" stroke="#e6e6e6" stroke-width="1.300"/>
<path d="M27 775.500h775M27 808.500h775M27 842.500h775M27 875.500h775M40.500 741v176M101.500 741v176M163.500 741v176M225.500 741v176M287.500 741v176M349.500 741v176M410.500 741v176M472.500 741v176M534.500 741v176M596.500 741v176M657.500 741v176M719.500 741v176M781.500 741v176" stroke="#888" stroke-opacity=".2" stroke-dasharray="5 6"/>
<path d="M70.500 741v176" stroke="#888" stroke-opacity=".25"/>
<path d="M291 859L294.700 866 300 859zM305 859L310 863 318 876 325 860 333 865 341 869 348 869 353 859zM380 859L387 870 395 872.700 402.400 877 410 867 419 869 425 860 427 859z" fill="#d4e6d4"/>
<path d="M27 792h775M27 859.500h775" stroke="#2020d8" stroke-width="1.200"/>
<polyline fill="none" stroke="#111" stroke-width="1.100" points="27,827 32,830 63,830 71,844 79,849 87,845 95,847 102,851 110,851 117,836 125,829 140,829 148,824 156,829 163,829 172,816 179,848 186,856 194,848 202,853 217,844 225,837 233,845 240,834 248,838 256,839 264,836 272,831 279,836 287,848 294.700,866 302.400,858 310,863 318,876 325,860 333,865 341,869 348,869 356,856 363.700,857 372,845 380,858 387,870 395,872.700 402.400,877 410,867 419,869 425,860 433,847 441,849 449,852 457.500,845.700 465,836.700 473,835 480,833 487,814 495.500,818 503.700,817 511.400,800 519,809 526,807 534,805 541,817 549.400,813 556.700,820 565,822 572,841 580,831 588,836 596,839 603,841 611.400,835 619.600,833 627,826 634,819 642.400,817 650,817 657.600,819 665.700,815 673,818 681,823 688,821 696,815 704.500,821 712,821 720,822 727.800,817 734,823"/>
<path d="M341 887L328 880" stroke="#000" stroke-width="2"/><path d="M319 876L330 873 327 885z" fill="#000" stroke="#000"/>
<path d="M472 905.700L414 883" stroke="#000" stroke-width="2"/><path d="M402.400 877.700L416 875 411 889z" fill="#000" stroke="#000"/>
<rect x="27" y="725" width="775" height="1" fill="#a0a8b0"/>
<path d="M802.500 95v823M27 917.500h776" stroke="#a0a8b0"/>

<!-- RSI RIGHT -->
<rect x="885" y="717.500" width="979" height="200" fill="#fff"/>
<path d="M885 735.500h979" stroke="#e6e6e6" stroke-width="1.300"/>
<path d="M885 770.500h979M885 805.500h979M885 839.500h979M885 874.500h979M924.500 735v182M1008.500 735v182M1092.500 735v182M1175.500 735v182M1259.500 735v182M1343.500 735v182M1426.500 735v182M1510.500 735v182M1594.500 735v182M1677.500 735v182M1761.500 735v182" stroke="#888" stroke-opacity=".2" stroke-dasharray="5 6"/>
<path d="M885 779.500h979M885 865.500h979" stroke="#2020d8" stroke-width="1.200"/>
<g transform="translate(880 700) scale(.66007 .33333)"><polyline fill="none" stroke="#111" stroke-width="1.100" vector-effect="non-scaling-stroke" points="7,478 14,482 25,449 35,451 46,495 57,449 68,470 79,497 88,505 99,447 110,427 120,438 131,457 141,454 152,466 162,430 173,447 184,467 194,515 205,450 215,414 226,418 236,415 247,385 258,337 268,380 279,386 290,375 300,369 310,364 322,397 332,391 343,405 353,410 363,423 373,460 385,498 395,472 405,445 416,465 426,476 437,459 447,462 458,460 468,420 479,430 489,433 500,436 511,445 521,420 532,394 543,380 553,340 564,360 574,368 585,357 596,370 606,380 617,383 628,391 638,372 649,379 659,370 670,362 681,360 692,327 702,312 712,295 723,337 735,335 746,335 756,325 765,325 775,275 785,255 795,268 805,258 818,292 828,293 838,278 849,295 860,310 870,240 880,240 891,263 902,272 912,286 923,270 933,268 944,292 955,316 965,304 975,293 986,285 996,320 1007,357 1018,335 1028,325 1039,335 1049,345 1060,366 1070,375 1082,397 1092,366 1102,378 1113,438 1123,452 1134,466 1145,438 1155,445 1165,400 1176,405 1187,435 1197,415 1207,397 1218,408 1229,424 1239,424 1250,432 1260,440 1271,415 1281,390 1292,400 1303,367 1313,377 1324,387 1334,385 1345,378 1356,352 1366,354 1377,322 1387,305 1398,300 1408,302 1419,297 1429,297 1441,318 1451,306 1461,306 1473,322 1483,320 1490,308"/></g>
<path d="M1009 890.500L1151 868" stroke="#f41414" stroke-width="2.600"/><path d="M1161 866L1149 859 1152 873z" fill="#f41414" stroke="#f41414"/>
<path d="M1864 95v823M885 917.500h979M885 717.500h979" stroke="#a0a8b0"/>

<!-- RSI TABS -->
<rect x="27" y="725.500" width="216" height="16" fill="#e6edf1"/><path d="M85.500 725v16M177.500 725v16M242.500 725v16M27 741.500h216" stroke="#a8b4bc"/>
<rect x="30" y="728" width="10" height="10" fill="#000"/><text x="43" y="737" class="tab">RSI (14)</text>
<rect x="89.500" y="728.500" width="9" height="9" fill="#eef2f4" stroke="#99a"/><text x="102" y="737" class="tab">MM Wilder (20)</text>
<rect x="181.500" y="728.500" width="9" height="9" fill="#eef2f4" stroke="#99a"/><text x="194" y="737" class="tab">TMA (14)</text>
<rect x="885" y="718" width="123" height="17" fill="#e6edf1"/><path d="M942.500 718v17M1007.500 718v17M885 735.500h123" stroke="#a8b4bc"/>
<rect x="888" y="721" width="10" height="10" fill="#000"/><text x="901" y="730" class="tab">RSI (14)</text>
<rect x="946.500" y="721.500" width="9" height="9" fill="#eef2f4" stroke="#99a"/><text x="959" y="730" class="tab">TMA (19)</text>

<!-- TIME AXIS -->
<path d="M40.500 917v4M70.500 917v4M101.500 917v4M163.500 917v4M225.500 917v4M287.500 917v4M349.500 917v4M410.500 917v4M472.500 917v4M534.500 917v4M596.500 917v4M657.500 917v4M719.500 917v4M781.500 917v4M924.500 917v4M1008.500 917v4M1092.500 917v4M1175.500 917v4M1259.500 917v4M1343.500 917v4M1426.500 917v4M1510.500 917v4M1594.500 917v4M1677.500 917v4M1761.500 917v4" stroke="#889"/>
<text x="70" y="933" text-anchor="middle" style="font-size:12.500px;font-weight:bold">20</text>
<text x="101" y="933" class="tm">01:00</text><text x="163" y="933" class="tm">03:00</text><text x="225" y="933" class="tm">05:00</text><text x="287" y="933" class="tm">07:00</text><text x="349" y="933" class="tm">09:00</text><text x="411" y="933" class="tm">11:00</text><text x="472" y="933" class="tm">13:00</text><text x="534" y="933" class="tm">15:00</text><text x="596" y="933" class="tm">17:00</text><text x="658" y="933" class="tm">19:00</text><text x="719" y="933" class="tm">21:00</text><text x="782" y="933" class="tm">23:00</text>
<text x="924" y="933" class="tm">08:00</text><text x="1009" y="933" class="tm">09:00</text><text x="1092" y="933" class="tm">10:00</text><text x="1175" y="933" class="tm">11:00</text><text x="1259" y="933" class="tm">12:00</text><text x="1342" y="933" class="tm">13:00</text><text x="1426" y="933" class="tm">14:00</text><text x="1509" y="933" class="tm">15:00</text><text x="1594" y="933" class="tm">16:00</text><text x="1677" y="933" class="tm">17:00</text><text x="1761" y="933" class="tm">18:00</text><text x="1838" y="933" class="tm">19</text>
<rect x="1845.500" y="918.500" width="18" height="17" fill="#eef2f5" stroke="#c0c8cc"/><text x="1849" y="931" style="font-size:12px;fill:#667">»</text>

<!-- PRICE AXIS LEFT -->
<path d="M802 99.500h4M802 135.500h2M802 171.500h4M802 207.500h2M802 243.500h4M802 279.500h2M802 315.500h4M802 459.500h4M802 495.500h2M802 531.500h4M802 603.500h4M802 639.500h2M802 675.500h4M802 742.500h4M802 775.500h4M802 791.500h2M802 808.500h4M802 842.500h4M802 875.500h4M802 758.500h2M802 892.500h2M802 824.500h3" stroke="#333"/>
<text x="808" y="103" class="ax">16 220</text><text x="808" y="176" class="axb">16 200</text><text x="808" y="247" class="ax">16 180</text><text x="808" y="319" class="ax">16 160</text><text x="808" y="392" class="ax">16 140</text><text x="808" y="463" class="ax">16 120</text><text x="808" y="536" class="axb">16 100</text><text x="808" y="607" class="ax">16 080</text><text x="808" y="679" class="ax">16 060</text>
<text x="808" y="747" class="axb">100</text><text x="808" y="779" class="ax">80</text><text x="808" y="812" class="ax">60</text><text x="808" y="846" class="ax">40</text><text x="808" y="879" class="ax">20</text>
<!-- left tags -->
<rect x="806.500" y="326.500" width="45" height="15" fill="#f2f5f4" stroke="#a8b0b4"/><text x="808" y="338" class="tg" style="fill:#3c9a3c">16 154,8</text>
<rect x="806.500" y="341.500" width="45" height="10" fill="#f2f5f4" stroke="#a8b0b4"/><text x="808" y="352" class="tg" style="fill:#3c9a3c">16 150,9</text>
<rect x="806.500" y="349.500" width="45" height="15" fill="#f2f5f4" stroke="#a8b0b4"/><text x="808" y="361" class="tg" style="fill:#ee2030">16 148,6</text>
<rect x="806.500" y="373.500" width="45" height="15" fill="#f2f5f6" stroke="#a8b0b4"/><text x="808" y="385" class="tg" style="fill:#5050d8">16 144,0</text>
<rect x="807" y="366" width="35" height="16" fill="#a2e6a2"/><text x="809" y="378" style="font-size:10.800px">4m06s</text>
<rect x="806.500" y="390.500" width="45" height="15" fill="#f2f5f6" stroke="#a8b0b4"/><text x="808" y="402" class="tg" style="fill:#333">16 137,3</text>
<rect x="806.500" y="568.500" width="45" height="15" fill="#f2f5f4" stroke="#a8b0b4"/><text x="808" y="580" class="tg" style="fill:#3c9a3c">16 087,8</text>
<rect x="806.500" y="656.500" width="45" height="15" fill="#f2f5f4" stroke="#a8b0b4"/><text x="808" y="668" class="tg" style="fill:#3c9a3c">16 063,5</text>
<rect x="806.500" y="815.500" width="36" height="15" fill="#fafbfb" stroke="#a8b0b4"/><text x="808" y="827" style="font-size:10.500px">51,085</text>

<!-- PRICE AXIS RIGHT -->
<path d="M1864 96.500h4M1864 137.500h4M1864 178.500h4M1864 220.500h4M1864 343.500h4M1864 384.500h4M1864 426.500h4M1864 467.500h4M1864 509.500h4M1864 550.500h4M1864 591.500h4M1864 632.500h4M1864 674.500h4M1864 735.500h4M1864 770.500h4M1864 787.500h2M1864 805.500h4M1864 839.500h4M1864 874.500h4M1864 752.500h2M1864 822.500h2M1864 825.500h3M1864 891.500h2" stroke="#333"/>
<text x="1870" y="100" class="ax">16 190</text><text x="1870" y="141" class="ax">16 180</text><text x="1870" y="182" class="ax">16 170</text><text x="1870" y="224" class="ax">16 160</text><text x="1870" y="307" class="ax">16 140</text><text x="1870" y="347" class="ax">16 130</text><text x="1870" y="388" class="ax">16 120</text><text x="1870" y="430" class="ax">16 110</text><text x="1870" y="472.500" class="axb">16 100</text><text x="1870" y="513" class="ax">16 090</text><text x="1870" y="554" class="ax">16 080</text><text x="1870" y="595" class="ax">16 070</text><text x="1870" y="637" class="ax">16 060</text><text x="1870" y="678" class="ax">16 050</text>
<text x="1870" y="740" class="axb">100</text><text x="1870" y="774" class="ax">80</text><text x="1870" y="809" class="ax">60</text><text x="1870" y="843" class="ax">40</text><text x="1870" y="878" class="ax">20</text>
<rect x="1868.500" y="233.500" width="44" height="16" fill="#f2f5f4" stroke="#a8b0b4"/><text x="1870" y="246" class="tg" style="fill:#3c9a3c">16 154,8</text>
<rect x="1868.500" y="250.500" width="44" height="10" fill="#f2f5f4" stroke="#a8b0b4"/><text x="1870" y="262" class="tg" style="fill:#3c9a3c">16 150,9</text>
<rect x="1868.500" y="260.500" width="44" height="17" fill="#f2f5f4" stroke="#a8b0b4"/><text x="1870" y="273" class="tg" style="fill:#ee2030">16 148,6</text>
<rect x="1868.500" y="285.500" width="44" height="16" fill="#f2f5f6" stroke="#a8b0b4"/><text x="1870" y="298" class="tg" style="fill:#5050d8">16 144,0</text>
<rect x="1868" y="278" width="36" height="16" fill="#a2e6a2"/><text x="1870" y="290" style="font-size:10.800px">4m06s</text>
<rect x="1868.500" y="306.500" width="44" height="16" fill="#f2f5f6" stroke="#a8b0b4"/><text x="1870" y="318" class="tg" style="fill:#333">16 137,3</text>
<rect x="1868.500" y="510.500" width="44" height="16" fill="#f2f5f4" stroke="#a8b0b4"/><text x="1870" y="522" class="tg" style="fill:#3c9a3c">16 087,8</text>
<rect x="1868.500" y="610.500" width="44" height="16" fill="#f2f5f4" stroke="#a8b0b4"/><text x="1870" y="622" class="tg" style="fill:#3c9a3c">16 063,5</text>
<rect x="1868.500" y="817.500" width="36" height="15" fill="#fafbfb" stroke="#a8b0b4"/><text x="1870" y="829" style="font-size:10.500px">48,206</text>

<!-- TOP BARS -->
<rect x="0" y="0" width="1915" height="3" fill="#708896"/>
<rect x="0" y="3" width="853" height="24" fill="url(#gl)"/><rect x="854" y="3" width="1061" height="24" fill="url(#gr)"/>
<path d="M0 27.500h1915" stroke="#7f9bae"/>
<path d="M20.500 3v24M38.500 3v24M83.500 3v24M166.500 3v24M234.500 3v24M879.500 3v24M896.500 3v24M941.500 3v24M1018.500 3v24M1086.500 3v24" stroke="#7f9bae"/>
<path d="M4 11v13M11.500 7v15" stroke="#224"/><rect x=".5" y="14.500" width="6" height="6" fill="#e05a5a" stroke="#a02020"/><rect x="8.500" y="10.500" width="6" height="9" fill="#3ccc3c" stroke="#128012"/>
<rect x="26.500" y="6.500" width="6" height="9" rx="3" fill="none" stroke="#666" stroke-width="1.500"/><rect x="26.500" y="12.500" width="6" height="9" rx="3" fill="none" stroke="#666" stroke-width="1.500"/><path d="M26 21l3 3 6-7" fill="none" stroke="#2060d0" stroke-width="1.800"/>
<text x="43" y="20" style="font-size:11px;font-weight:bold">DAX</text><path d="M71 14h7l-3.500 3.500z" fill="#111"/>
<text x="89" y="19" style="font-size:11.400px;font-weight:bold">15 minutes</text><path d="M156 14h7l-3.500 3.500z" fill="#111"/>
<text x="172" y="20" style="font-size:10.800px">1 k unités</text><path d="M224 14h7l-3.500 3.500z" fill="#111"/>
<rect x="242.500" y="10.500" width="11" height="10" fill="#f4f6f7" stroke="#99a"/><text x="246" y="19" style="font-size:9.500px;font-weight:bold;fill:#444">i</text>
<text x="261" y="20" style="font-size:11px;fill:#8b1528">(-60,6)</text>

<path d="M861 11v13M869 7v15" stroke="#224"/><rect x="858.500" y="14.500" width="6" height="6" fill="#e05a5a" stroke="#a02020"/><rect x="866.500" y="10.500" width="6" height="9" fill="#3ccc3c" stroke="#128012"/>
<rect x="884.500" y="6.500" width="6" height="9" rx="3" fill="none" stroke="#666" stroke-width="1.500"/><rect x="884.500" y="14.500" width="6" height="9" rx="3" fill="none" stroke="#666" stroke-width="1.500"/>
<text x="901" y="20" style="font-size:11px;font-weight:bold">DAX</text><path d="M929 14h7l-3.500 3.500z" fill="#111"/>
<text x="947" y="19" style="font-size:11.400px;font-weight:bold">5 minutes</text><path d="M1008 14h7l-3.500 3.500z" fill="#111"/>
<text x="1024" y="20" style="font-size:10.800px">1 k unités</text><path d="M1076 14h7l-3.500 3.500z" fill="#111"/>
<rect x="1095.500" y="10.500" width="11" height="10" fill="#eef3f6" stroke="#99a"/><text x="1099" y="19" style="font-size:9.500px;font-weight:bold;fill:#444">i</text>
<text x="1114" y="20" style="font-size:11px;fill:#8b1528">(-60,6)</text>

<!-- ORDERS ROW -->
<path d="M0 77.500h853M885 77.500h1030" stroke="#cfd7dc"/>
<text x="102" y="56">Ordres :</text><text x="147" y="56" style="font-weight:bold">0</text><use href="#doc" x="156" y="45"/><text x="178" y="56">/</text><text x="186" y="56" style="font-weight:bold">0</text><use href="#gear" x="194" y="45"/>
<text x="288" y="56">Position :</text><text x="337" y="57" style="font-weight:bold">0</text><use href="#docp" x="345" y="46"/><text x="367" y="56">/</text><text x="375" y="56" style="font-weight:bold">0</text><use href="#gear" x="382" y="45"/>
<text x="1028" y="56">Ordres :</text><text x="1073" y="56" style="font-weight:bold">0</text><use href="#doc" x="1083" y="45"/><text x="1104" y="56">/</text><text x="1112" y="56" style="font-weight:bold">0</text><use href="#gear" x="1121" y="45"/>
<text x="1283" y="56">Position :</text><text x="1331" y="57" style="font-weight:bold">0</text><use href="#docp" x="1340" y="46"/><text x="1361" y="56">/</text><text x="1369" y="56" style="font-weight:bold">0</text><use href="#gear" x="1380" y="45"/>

<path d="M475.500 28v50M1537.500 28v50" stroke="#8fa2ae"/>
<use href="#panel"/><use href="#panel" x="1062"/>
<rect x="479" y="54" width="18" height="14" rx="2" fill="#b8bec4"/><path d="M481 57.500h14M481 60.500h14M483 64h10" stroke="#f4f4f4" stroke-dasharray="1.500 1"/>
<rect x="1541" y="54" width="18" height="14" rx="2" fill="#2c68d4"/><path d="M1543 57.500h14M1543 60.500h14M1545 64h10" stroke="#fff" stroke-dasharray="1.500 1"/>
<rect x="780.500" y="37.500" width="11" height="11" rx="1" fill="#fff" stroke="#99a4aa"/><text x="796" y="47">L</text><text x="821.500" y="46" text-anchor="middle" style="fill:#b0b6ba">20</text>
<rect x="1842.500" y="37.500" width="11" height="11" rx="1" fill="#fff" stroke="#99a4aa"/><path d="M1845 43l2 3 5-7" fill="none" stroke="#000" stroke-width="2"/><text x="1858" y="47">L</text><text x="1883.500" y="46" text-anchor="middle">20</text>
<path d="M1867 19h10" stroke="#64788a" stroke-width="2"/><rect x="1882" y="10" width="9" height="9" fill="none" stroke="#64788a" stroke-width="1.600"/><path d="M1898 10l9 9M1907 10l-9 9" stroke="#64788a" stroke-width="2.400"/>

<!-- TAB ROWS -->
<rect x="27" y="78" width="773" height="16" fill="#e4ecf1"/><rect x="885" y="78" width="978" height="16" fill="#e4ecf1"/>
<path d="M27 94.500h775M885 94.500h979M46.500 78v16M66.500 78v16M104.500 78v16M208.500 78v16M305.500 78v16M404.500 78v16M504.500 78v16M596.500 78v16M699.500 78v16M800.500 78v16M904.500 78v16M925.500 78v16M963.500 78v16M1066.500 78v16M1164.500 78v16M1263.500 78v16M1363.500 78v16M1454.500 78v16M1557.500 78v16M1657.500 78v16M1757.500 78v16M1859.500 78v16" stroke="#a2b0ba"/>
<use href="#tabbtn" x="30" y="80"/><path d="M35 83h4v3h3l-5 5-5-5h3z" fill="#e02a2a"/>
<use href="#tabbtn" x="50" y="80"/><path d="M57 83l5 5h-3v3h-4v-3h-3z" fill="#22aa22"/>
<use href="#tabbtn" x="888" y="80"/><path d="M893 83h4v3h3l-5 5-5-5h3z" fill="#e02a2a"/>
<use href="#tabbtn" x="908" y="80"/><path d="M915 83l5 5h-3v3h-4v-3h-3z" fill="#22aa22"/>
<rect x="70" y="81" width="5" height="10" fill="#44cc44"/><rect x="75" y="81" width="5" height="10" fill="#e86a6a"/><text x="83" y="91" class="tab">Prix</text>
<rect x="108" y="81" width="10" height="10" fill="#000"/><text x="121" y="91" class="tab">Points pivots (4h)</text>
<rect x="212" y="81" width="3" height="10" fill="#f00"/><rect x="215" y="81" width="4" height="10" fill="#000"/><rect x="219" y="81" width="3" height="10" fill="#0a8a0a"/><text x="225" y="91" class="tab">Points pivots (J)</text>
<rect x="309" y="81" width="3" height="10" fill="#f00"/><rect x="312" y="81" width="4" height="10" fill="#000"/><rect x="316" y="81" width="3" height="10" fill="#0a8a0a"/><text x="322" y="91" class="tab">Points pivots (S)</text>
<rect x="408" y="81" width="3" height="10" fill="#f00"/><rect x="411" y="81" width="4" height="10" fill="#000"/><rect x="415" y="81" width="3" height="10" fill="#0a8a0a"/><text x="421" y="91" class="tab">Points pivots (M)</text>
<rect x="508.500" y="81.500" width="9" height="9" fill="#eef2f4" stroke="#99a"/><text x="521" y="91" class="tab">Clôture (J, Pré)</text>
<rect x="600.500" y="81.500" width="9" height="9" fill="#eef2f4" stroke="#99a"/><text x="613" y="91" class="tab">Plus Haut (J, Pré)</text>
<rect x="703.500" y="81.500" width="9" height="9" fill="#eef2f4" stroke="#99a"/><text x="716" y="91" class="tab">Plus Bas (J, Pré)</text>

<rect x="928" y="81" width="5" height="10" fill="#44cc44"/><rect x="933" y="81" width="5" height="10" fill="#e86a6a"/><text x="941" y="91" class="tab">Prix</text>
<rect x="966" y="81" width="10" height="10" fill="#000"/><text x="979" y="91" class="tab">Points pivots (4h)</text>
<rect x="1070" y="81" width="3" height="10" fill="#f00"/><rect x="1073" y="81" width="4" height="10" fill="#000"/><rect x="1077" y="81" width="3" height="10" fill="#0a8a0a"/><text x="1083" y="91" class="tab">Points pivots (J)</text>
<rect x="1167" y="81" width="3" height="10" fill="#f00"/><rect x="1170" y="81" width="4" height="10" fill="#000"/><rect x="1174" y="81" width="3" height="10" fill="#0a8a0a"/><text x="1180" y="91" class="tab">Points pivots (S)</text>
<rect x="1267" y="81" width="3" height="10" fill="#f00"/><rect x="1270" y="81" width="4" height="10" fill="#000"/><rect x="1274" y="81" width="3" height="10" fill="#0a8a0a"/><text x="1280" y="91" class="tab">Points pivots (M)</text>
<rect x="1367.500" y="81.500" width="9" height="9" fill="#eef2f4" stroke="#99a"/><text x="1380" y="91" class="tab">Clôture (J, Pré)</text>
<rect x="1458.500" y="81.500" width="9" height="9" fill="#eef2f4" stroke="#99a"/><text x="1471" y="91" class="tab">Plus Haut (J, Pré)</text>
<rect x="1561.500" y="81.500" width="9" height="9" fill="#eef2f4" stroke="#99a"/><text x="1574" y="91" class="tab">Plus Bas (J, Pré)</text>
<rect x="1661.500" y="81.500" width="9" height="9" fill="#eef2f4" stroke="#99a"/><text x="1674" y="91" class="tab">Vol par prix (25)</text>
<rect x="1761.500" y="81.500" width="9" height="9" fill="#eef2f4" stroke="#99a"/><text x="1773" y="91" class="tab">Plus Bas (S, Pré)</text>
<rect x="1861.500" y="81.500" width="2" height="9" fill="#eef2f4" stroke="#99a"/>

<!-- BOTTOM BARS -->
<rect x="0" y="936" width="1915" height="21" fill="#c5d8e3"/><path d="M0 936.500h1915" stroke="#8fa4b0"/>

<!-- SIDEBARS -->
<rect x="0" y="28" width="26" height="909" fill="#c6dae5"/><path d="M26.500 28v909" stroke="#90a6b3"/>
<rect x="854" y="28" width="31" height="909" fill="#c6dae5"/><path d="M884.500 28v909M853.500 0v957" stroke="#7f97a5"/>
<use href="#side"/><use href="#side" x="858"/>

<!-- TOOLBAR -->
<use href="#tbl"/><use href="#tbl" x="858"/>
<rect x="250.500" y="940.500" width="415" height="15" fill="#c9dce6" stroke="#9bb0bc"/><rect x="250.500" y="940.500" width="14" height="15" fill="#e0ebf1" stroke="#9bb0bc"/><path d="M260 944v7l-4-3.500z" fill="#111"/><rect x="629.500" y="940.500" width="22" height="15" fill="#dfe9ef" stroke="#b0c0ca"/><rect x="651.500" y="940.500" width="14" height="15" fill="#e0ebf1" stroke="#9bb0bc"/><path d="M656 944v7l4-3.500z" fill="#111"/>
<rect x="1108.500" y="940.500" width="620" height="15" fill="#c9dce6" stroke="#9bb0bc"/><rect x="1108.500" y="940.500" width="14" height="15" fill="#e0ebf1" stroke="#9bb0bc"/><path d="M1118 944v7l-4-3.500z" fill="#111"/><rect x="1626.500" y="940.500" width="49" height="15" fill="#dfe9ef" stroke="#b0c0ca"/><rect x="1713.500" y="940.500" width="15" height="15" fill="#e0ebf1" stroke="#9bb0bc"/><path d="M1719 944v7l4-3.500z" fill="#111"/>
<use href="#tbr"/><use href="#tbr" x="1059"/>
<path d="M1766 945l-3 3 3 3M1763 948h8a4 4 0 0 1 4 4v4" fill="none" stroke="#2a78d8" stroke-width="2.400"/>
</svg>
</body></html>
